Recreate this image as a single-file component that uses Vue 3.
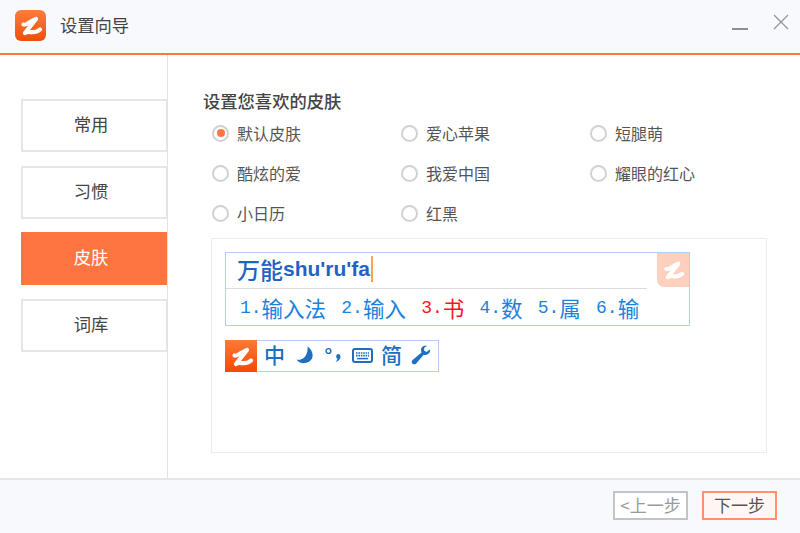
<script setup>
const menus = [
  { name: '常用' },
  { name: '习惯' },
  { name: '皮肤', active: true },
  { name: '词库' }
]

const skins = ['默认皮肤', '爱心苹果', '短腿萌', '酷炫的爱', '我爱中国', '耀眼的红心', '小日历', '红黑']

const candidates = [
  { num: '1.', word: '输入法' },
  { num: '2.', word: '输入' },
  { num: '3.', word: '书', hot: true },
  { num: '4.', word: '数' },
  { num: '5.', word: '属' },
  { num: '6.', word: '输' }
]

const squiggle = 'M8.5 14.5 C11 16 15 11 21 9 L10 23 C14 19.5 18 25.5 25 19.5'
</script>

<template>
  <div class="window">
    <header class="titlebar">
      <svg class="logo" viewBox="0 0 31 31">
        <defs>
          <linearGradient id="logoBg" x1="0" y1="0" x2="0" y2="1">
            <stop offset="0" stop-color="#fb7d3f" />
            <stop offset="1" stop-color="#f04f0c" />
          </linearGradient>
        </defs>
        <rect width="31" height="31" rx="6" fill="url(#logoBg)" />
        <path :d="squiggle" fill="none" stroke="#fff" stroke-width="4.2" stroke-linecap="round" stroke-linejoin="round" />
      </svg>
      <span class="title">设置向导</span>
      <div class="win-btns">
        <svg class="min" width="16" height="4" viewBox="0 0 16 4"><path d="M0 2H16" stroke="#8f8f8f" stroke-width="2" /></svg>
        <svg class="close" width="16" height="16" viewBox="0 0 16 16"><path d="M1 1L15 15M15 1L1 15" stroke="#949494" stroke-width="1.2" /></svg>
      </div>
    </header>

    <div class="body">
      <aside class="sidebar">
        <div v-for="m in menus" :key="m.name" class="menu-item" :class="{ active: m.active }"><span>{{ m.name }}</span></div>
      </aside>

      <main class="content">
        <h2 class="heading">设置您喜欢的皮肤</h2>
        <div class="skins">
          <label v-for="(s, i) in skins" :key="s" class="skin">
            <span class="radio" :class="{ on: i === 0 }"></span>
            {{ s }}
          </label>
        </div>

        <section class="preview">
          <div class="ime">
            <div class="ime-input">
              <span class="cn">万能</span><span class="latin">shu'ru'fa</span><span class="caret"></span>
            </div>
            <div class="ime-cands">
              <span v-for="c in candidates" :key="c.num" class="cand" :class="{ hot: c.hot }">
                <span class="num">{{ c.num }}</span>{{ c.word }}
              </span>
            </div>
            <svg class="ime-badge" viewBox="0 0 31 31">
              <path :d="squiggle" fill="none" stroke="#fff" stroke-width="4.2" stroke-linecap="round" stroke-linejoin="round" />
            </svg>
          </div>

          <div class="status">
            <span class="status-logo">
              <svg width="31" height="31" viewBox="0 0 31 31">
                <path :d="squiggle" fill="none" stroke="#fff" stroke-width="4.2" stroke-linecap="round" stroke-linejoin="round" />
              </svg>
            </span>
            <span class="st-text zh">中</span>
            <svg class="st-icon moon" width="18" height="18" viewBox="0 0 18 18">
              <path d="M11.5 0.5 C17 4 18.5 11 14 15 C9.5 18.5 3 17.5 0.5 13.5 C6 15 12.5 10 11.5 0.5Z" fill="#1f6fc0" />
            </svg>
            <svg class="st-icon punct" width="17" height="16" viewBox="0 0 17 16">
              <circle cx="3.5" cy="4" r="2.4" fill="none" stroke="#1f6fc0" stroke-width="1.4" />
              <path d="M13 7 C15.6 7 16 10 15 11.8 C14.2 13.2 12.6 14.4 10.6 15 C12 13.6 12.4 12.6 12.4 11.6 C10.6 11 11 7 13 7Z" fill="#1f6fc0" />
            </svg>
            <svg class="st-icon keys" width="21" height="15" viewBox="0 0 21 15">
              <rect x="1" y="1" width="19" height="13" rx="2" fill="none" stroke="#1f6fc0" stroke-width="2" />
              <path d="M4 5H17M4 7.6H17" stroke="#1f6fc0" stroke-width="1.6" stroke-dasharray="1.6 0.8" />
              <path d="M5 10.6H16" stroke="#1f6fc0" stroke-width="1.5" />
            </svg>
            <span class="st-text jian">简</span>
            <svg class="st-icon wrench" width="20" height="20" viewBox="0 0 20 20">
              <path d="M19 4.2 L15.6 7 L13 5.6 L13.4 2.6 L16 0.9 C12.8 0 9.8 2.1 10 5.4 C10.1 6.2 10.2 6.8 10.5 7.4 L1.6 14.9 C0.2 16.2 0.7 18 1.7 18.8 C2.8 19.7 4.2 19.5 5.2 18.4 L12.7 9.7 C16.4 10.6 19.8 8 19 4.2Z" fill="#1f6fc0" />
            </svg>
          </div>
        </section>
      </main>
    </div>

    <footer class="footer">
      <button class="btn prev">&lt;上一步</button>
      <button class="btn next">下一步</button>
    </footer>
  </div>
</template>

<style scoped>
.window {
  width: 800px;
  height: 533px;
  display: flex;
  flex-direction: column;
  background: #fff;
  font-family: "Noto Sans CJK SC", "Liberation Sans", sans-serif;
  color: #444;
  overflow: hidden;
}

.titlebar {
  height: 53px;
  flex: none;
  box-sizing: content-box;
  display: flex;
  align-items: center;
  padding-left: 15px;
  background: #f8f9fd;
  border-bottom: 2px solid #ff7540;
}

.logo {
  width: 31px;
  height: 31px;
  margin-top: -2px;
}

.title {
  margin: -4px 0 0 14px;
  font-size: 17.3px;
  color: #444;
}

.win-btns {
  margin-left: auto;
  display: flex;
  align-items: flex-start;
  height: 53px;
}

.min {
  margin: 27px 0 0 0;
}

.close {
  margin: 14px 11px 0 25px;
}

.body {
  flex: 1;
  display: flex;
  min-height: 0;
}

.sidebar {
  width: 167px;
  flex: none;
  box-sizing: content-box;
  border-right: 1px solid #e2e2e2;
  padding-top: 44px;
  display: flex;
  flex-direction: column;
  align-items: flex-end;
  gap: 13.5px;
}

.menu-item {
  width: 146px;
  height: 53px;
  box-sizing: border-box;
  border: 2px solid #e6e6e6;
  border-right-width: 1px;
  display: flex;
  align-items: center;
  justify-content: center;
  padding: 0 7px 4px 0;
  font-size: 17.3px;
  color: #444;
}

.menu-item.active {
  background: #ff7540;
  border-color: #ff7540;
  color: #fff;
}

.content {
  flex: 1;
  padding: 34px 0 0 35px;
  min-width: 0;
}

.heading {
  margin: 0;
  height: 24px;
  line-height: 24px;
  font-size: 17.3px;
  font-weight: 500;
  color: #444;
}

.skins {
  margin: 0 0 0 9px;
  display: grid;
  grid-template-columns: repeat(3, 189px);
  grid-auto-rows: 40px;
}

.skin {
  display: flex;
  align-items: center;
  gap: 8px;
  font-size: 16px;
  color: #555;
}

.radio {
  width: 17px;
  height: 17px;
  box-sizing: border-box;
  border: 2px solid #d2d2d2;
  border-radius: 50%;
  display: flex;
  align-items: center;
  justify-content: center;
  background: #fff;
}

.radio.on::after {
  content: "";
  width: 8px;
  height: 8px;
  border-radius: 50%;
  background: #ff7540;
}

.preview {
  width: 556px;
  height: 215px;
  box-sizing: border-box;
  margin: 5px 0 0 8px;
  border: 1px solid #ececec;
  padding: 13px;
}

.ime {
  position: relative;
  width: 465px;
  height: 74px;
  box-sizing: border-box;
  border: 1px solid #b3cff5;
  background: #fff;
}

.ime-input {
  width: 421px;
  height: 36px;
  box-sizing: border-box;
  border-bottom: 1px solid #ddd;
  padding: 0 0 3px 11px;
  display: flex;
  align-items: center;
  color: #1e63c6;
  font-weight: 700;
}

.cn {
  font-size: 23px;
  font-weight: 500;
}

.latin {
  font-family: "Liberation Sans", sans-serif;
  font-size: 21px;
}

.caret {
  width: 2px;
  height: 26px;
  margin-left: 1px;
  background: #f5a553;
}

.ime-cands {
  display: flex;
  height: 36px;
  align-items: center;
  padding: 0 0 8px 14px;
  font-size: 21.5px;
  color: #1d82dc;
}

.cand {
  margin-right: 15.2px;
  display: flex;
  align-items: center;
}

.cand.hot {
  color: #f8141c;
}

.num {
  font-family: "Liberation Mono", monospace;
  font-size: 18px;
  padding-top: 2px;
}

.ime-badge {
  position: absolute;
  top: 0;
  right: 0;
  width: 32px;
  height: 34px;
  padding: 1px;
  box-sizing: border-box;
  background: #fdd0bd;
  border-bottom-left-radius: 7px;
}

.status {
  margin-top: 14px;
  width: 214px;
  height: 32px;
  box-sizing: border-box;
  border: 1px solid #b3cff5;
  display: flex;
  align-items: center;
  color: #1f6fc0;
}

.status-logo {
  width: 32px;
  height: 32px;
  margin: -1px 0 -1px -1px;
  flex: none;
  display: flex;
  align-items: center;
  justify-content: center;
  background: linear-gradient(#fb7a3a, #f24a05);
}

.st-text {
  font-size: 21px;
  line-height: 1;
  font-weight: 500;
  margin-top: -4px;
}

.zh {
  margin-left: 7px;
}

.st-icon {
  flex: none;
}

.moon {
  margin-left: 11px;
  margin-top: -2px;
}

.punct {
  margin-left: 11px;
  margin-top: -2px;
}

.keys {
  margin-left: 10px;
  margin-top: -2px;
}

.jian {
  margin-left: 8px;
}

.wrench {
  margin-left: 9px;
  margin-top: -2px;
}

.footer {
  flex: none;
  height: 42px;
  box-sizing: content-box;
  background: #f8f9fd;
  border-top: 2px solid #e6e6e6;
  display: flex;
  align-items: flex-start;
  justify-content: flex-end;
  gap: 14px;
  padding: 11px 23px 0 0;
}

.btn {
  width: 75px;
  height: 29px;
  box-sizing: border-box;
  padding: 0 0 2px;
  font-family: inherit;
  font-size: 17px;
  line-height: 1;
}

.prev {
  background: #fff;
  border: 2px solid #c4c4c4;
  color: #9a9a9a;
}

.next {
  background: #fff7f3;
  border: 2px solid #ff9269;
  color: #555;
}
</style>
